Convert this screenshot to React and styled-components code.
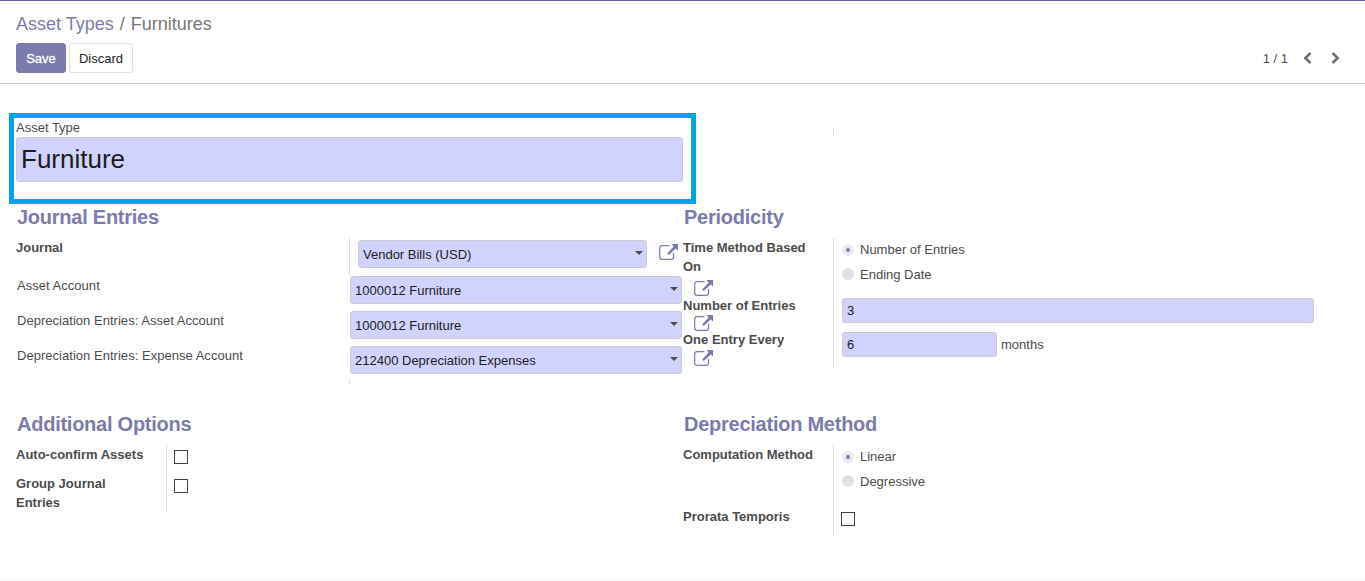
import React from "react";
import styled, { createGlobalStyle } from "styled-components";

const GlobalStyle = createGlobalStyle`
  *, *::before, *::after { box-sizing: border-box; }
  body {
    margin: 0;
    background: #fff;
    color: #4c4c4c;
    font: 13px/19px "Liberation Sans", Arial, sans-serif;
  }
  button, input { font: inherit; }
`;

const Page = styled.div`
  height: 581px;
  display: flex;
  flex-direction: column;
  overflow: hidden;
  border-top: 1px solid #5f5e97;
  border-bottom: 1px solid #f8f8f9;
`;

const ControlPanel = styled.header`
  height: 83px;
  padding: 10px 25px 0 16px;
  border-bottom: 1px solid #cccccc;
`;

const Breadcrumb = styled.nav`
  display: flex;
  gap: 6px;
  height: 32px;
  font-size: 18px;
  line-height: 27px;
  color: #777777;
`;

const Crumb = styled.a`
  color: #7c7bad;
`;

const Toolbar = styled.div`
  display: flex;
  align-items: center;
  gap: 3px;
  height: 30px;
`;

const Button = styled.button`
  width: ${(p) => p.$width}px;
  height: 30px;
  padding: 0;
  border: 1px solid ${(p) => (p.$primary ? "#7c7bad" : "#dee2e6")};
  border-radius: 3px;
  background: ${(p) => (p.$primary ? "#7c7bad" : "#fff")};
  color: ${(p) => (p.$primary ? "#fff" : "#212529")};
  -webkit-text-stroke: ${(p) => (p.$primary ? "0.3px #fff" : "0")};
`;

const Pager = styled.div`
  display: flex;
  align-items: center;
  margin-left: auto;
  color: #4c4c4c;
`;

const PagerCount = styled.span`
  margin-right: 15px;
`;

const Chevron = styled.svg`
  display: block;
  margin-right: ${(p) => p.$gap || 0}px;
  fill: none;
  stroke: #6c6f74;
  stroke-width: 2.5;
`;

const TitleRow = styled.div`
  display: flex;
  align-items: flex-start;
  height: 91px;
  margin: 29px 0 0 9px;
`;

const TitleFrame = styled.section`
  width: 687px;
  height: 91px;
  padding: 0 8px 0 2px;
  border: 5px solid #00a2e8;
`;

const TitleInput = styled.input`
  display: block;
  width: 667px;
  height: 45px;
  padding: 0 4px;
  border: 1px solid #cccccc;
  border-radius: 3px;
  background: #d2d2ff;
  color: #1c1c1c;
  font-size: 26px;
`;

const TitleRule = styled.div`
  width: 1px;
  height: 8px;
  margin: 15px 0 0 137px;
  background: #dddddd;
`;

const Sheet = styled.main`
  display: grid;
  grid-template-columns: 667px 667px;
  grid-template-rows: 207px 1fr;
  padding-left: 16px;
`;

const Heading = styled.h2`
  height: 34px;
  margin: 0;
  padding: 1px 0 0 1px;
  color: #7c7bad;
  font-size: 20px;
  line-height: 24px;
  font-weight: 700;
  letter-spacing: -0.25px;
`;

const Group = styled.div`
  display: grid;
  grid-template-columns: ${(p) => p.$label}px 1fr;
`;

const Labels = styled.div`
  display: flex;
  flex-direction: column;
`;

const Label = styled.label`
  height: ${(p) => p.$height}px;
  padding-right: ${(p) => p.$inset || 0}px;
  font-weight: 700;
`;

const Values = styled.div`
  display: flex;
  flex-direction: column;
  align-items: flex-start;
  height: ${(p) => p.$height}px;
  padding: ${(p) => p.$pad};
  border-left: 1px solid #dddddd;
`;

const JournalValue = styled.div`
  display: flex;
  height: 37px;
  padding: 2px 0 0 8px;
  border-left: 1px solid #dddddd;
`;

const AccountRows = styled.div`
  width: 697px;
  padding-top: 1px;
`;

const AccountRow = styled.div`
  display: grid;
  grid-template-columns: 334px 332px 31px;
  height: 35px;
`;

const AccountLabel = styled.label`
  padding-left: 1px;
  letter-spacing: 0.03px;
`;

const RuleEnd = styled.div`
  width: 1px;
  height: 4px;
  margin: -1px 0 0 333px;
  background: #dddddd;
`;

const SelectBox = styled.div`
  display: flex;
  align-items: center;
  justify-content: space-between;
  flex: none;
  width: ${(p) => p.$width}px;
  height: 28px;
  padding: 0 3px 0 4px;
  border: 1px solid #cccccc;
  border-radius: 3px;
  background: #d2d2ff;
  color: #1c1c1c;
`;

const Caret = styled.span`
  margin-top: -2px;
  border: 4px solid transparent;
  border-top-color: #4c4c4c;
  border-bottom: 0;
`;

const LinkIcon = styled.svg`
  display: block;
  flex: none;
  margin: 4px 0 0 12px;
`;

const NumberInput = styled.input`
  display: block;
  width: ${(p) => p.$width}px;
  height: 25px;
  padding: 0 4px;
  border: 1px solid #cccccc;
  border-radius: 3px;
  background: #d2d2ff;
  color: #1c1c1c;
`;

const NumberLine = styled.div`
  display: flex;
  align-items: center;
  gap: 4px;
  height: 25px;
  margin-top: ${(p) => p.$top}px;
`;

const RadioOption = styled.label`
  display: flex;
  align-items: flex-start;
  gap: 6px;
  height: 25px;
`;

const RadioList = styled.div`
  padding-left: 1px;
`;

const RadioDot = styled.span`
  display: grid;
  place-items: center;
  width: 12px;
  height: 12px;
  margin-top: ${(p) => (p.$on ? 4 : 3)}px;
  border-radius: 50%;
  background: ${(p) => (p.$on ? "#e9ecef" : "#dee2e6")};

  &::after {
    content: "";
    width: 4px;
    height: 4px;
    border-radius: 50%;
    background: ${(p) => (p.$on ? "#7c7bad" : "transparent")};
  }
`;

const Checkbox = styled.span`
  width: 14px;
  height: 14px;
  margin-top: ${(p) => p.$top}px;
  border: 1px solid #444;
  background: #fff;
`;

const accounts = [
  ["Asset Account", "1000012 Furniture"],
  ["Depreciation Entries: Asset Account", "1000012 Furniture"],
  ["Depreciation Entries: Expense Account", "212400 Depreciation Expenses"],
];

function ExternalLink() {
  return (
    <LinkIcon width="19" height="17" viewBox="0 0 19 17">
      <path
        d="M10.5 1.6H3A2.3 2.3 0 0 0 .7 3.9v9.2a2.3 2.3 0 0 0 2.3 2.3h9.2a2.3 2.3 0 0 0 2.3-2.3V8.8"
        fill="none"
        stroke="#7c7bad"
        strokeWidth="1.2"
      />
      <path d="M12.3 0H19v6.6l-2.2-2.1-7 6.6-1.6-1.6 6.4-7.1z" fill="#7c7bad" />
    </LinkIcon>
  );
}

function Select({ width, value }) {
  return (
    <SelectBox $width={width}>
      {value}
      <Caret />
    </SelectBox>
  );
}

function Radio({ on, children }) {
  return (
    <RadioOption>
      <RadioDot $on={on} />
      {children}
    </RadioOption>
  );
}

export default function App() {
  return (
    <Page>
      <GlobalStyle />
      <ControlPanel>
        <Breadcrumb>
          <Crumb>Asset Types</Crumb>
          <span>/</span>
          <span>Furnitures</span>
        </Breadcrumb>
        <Toolbar>
          <Button $primary $width={50}>Save</Button>
          <Button $width={64}>Discard</Button>
          <Pager>
            <PagerCount>1 / 1</PagerCount>
            <Chevron $gap={19} width="9" height="12" viewBox="0 0 9 12">
              <path d="M7.5 1L2.3 6l5.2 5" />
            </Chevron>
            <Chevron width="9" height="12" viewBox="0 0 9 12">
              <path d="M1.5 1l5.2 5-5.2 5" />
            </Chevron>
          </Pager>
        </Toolbar>
      </ControlPanel>

      <TitleRow>
        <TitleFrame>
          <div>Asset Type</div>
          <TitleInput defaultValue="Furniture" />
        </TitleFrame>
        <TitleRule />
      </TitleRow>

      <Sheet>
        <section>
          <Heading>Journal Entries</Heading>
          <Group $label={333}>
            <Label $height={37}>Journal</Label>
            <JournalValue>
              <Select width={289} value="Vendor Bills (USD)" />
              <ExternalLink />
            </JournalValue>
          </Group>
          <AccountRows>
            {accounts.map(([label, value]) => (
              <AccountRow key={label}>
                <AccountLabel>{label}</AccountLabel>
                <Select width={332} value={value} />
                <ExternalLink />
              </AccountRow>
            ))}
          </AccountRows>
          <RuleEnd />
        </section>

        <section>
          <Heading>Periodicity</Heading>
          <Group $label={150}>
            <Labels>
              <Label $height={58} $inset={20}>Time Method Based On</Label>
              <Label $height={34}>Number of Entries</Label>
              <Label $height={34}>One Entry Every</Label>
            </Labels>
            <Values $height={130} $pad="2px 0 0 8px">
              <Radio on>Number of Entries</Radio>
              <Radio>Ending Date</Radio>
              <NumberLine $top={8}>
                <NumberInput $width={472} defaultValue="3" />
              </NumberLine>
              <NumberLine $top={9}>
                <NumberInput $width={155} defaultValue="6" />
                <span>months</span>
              </NumberLine>
            </Values>
          </Group>
        </section>

        <section>
          <Heading>Additional Options</Heading>
          <Group $label={150}>
            <Labels>
              <Label $height={29}>Auto-confirm Assets</Label>
              <Label $height={38} $inset={40}>Group Journal Entries</Label>
            </Labels>
            <Values $height={67} $pad="0 0 0 7px">
              <Checkbox $top={5} />
              <Checkbox $top={15} />
            </Values>
          </Group>
        </section>

        <section>
          <Heading>Depreciation Method</Heading>
          <Group $label={150}>
            <Labels>
              <Label $height={62}>Computation Method</Label>
              <Label $height={29}>Prorata Temporis</Label>
            </Labels>
            <Values $height={91} $pad="2px 0 0 7px">
              <RadioList>
                <Radio on>Linear</Radio>
                <Radio>Degressive</Radio>
              </RadioList>
              <Checkbox $top={15} />
            </Values>
          </Group>
        </section>
      </Sheet>
    </Page>
  );
}
